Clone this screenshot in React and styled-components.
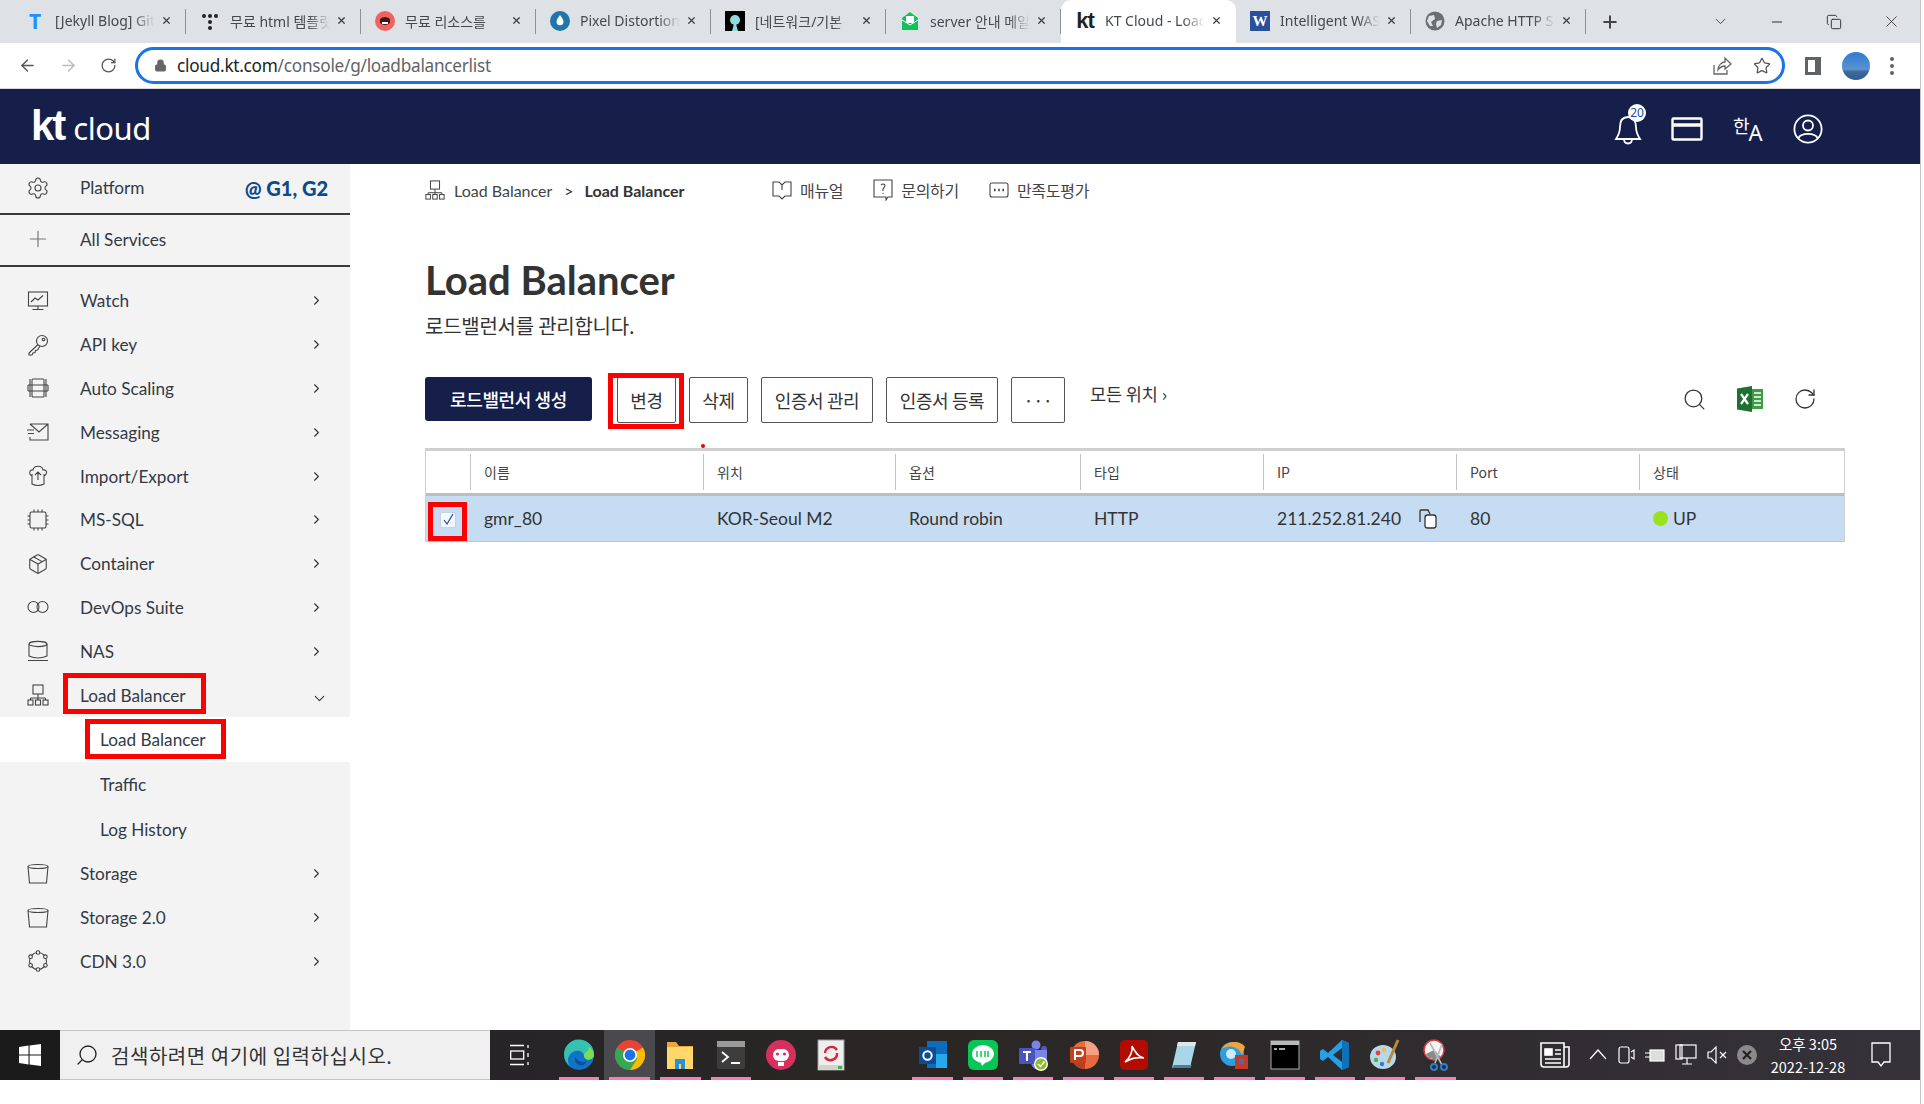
import React from 'react'
import styled, { createGlobalStyle } from 'styled-components'
import { ArrowLeft, ArrowRight, RotateCw, Lock, Star, ChevronDown, ChevronRight, Minus, X, Plus, Search, Settings, Package, Copy } from 'lucide-react'

const SANS = `"Noto Sans", "Noto Sans CJK KR", sans-serif`
const LATO = `Lato, "Noto Sans CJK KR", sans-serif`
const KR = `"Noto Sans CJK KR", "Noto Sans", sans-serif`

const GlobalStyle = createGlobalStyle`
  html, body { margin: 0; padding: 0; background: #fff; }
  *, *::before, *::after { box-sizing: border-box; }
`

const tabs = [
  { title: '[Jekyll Blog] GitHub', icon: 'T' },
  { title: '무료 html 템플릿', icon: 'dots' },
  { title: '무료 리소스를', icon: 'red' },
  { title: 'Pixel Distortion', icon: 'drop' },
  { title: '[네트워크/기본', icon: 'black' },
  { title: 'server 안내 메일', icon: 'mail' },
  { title: 'KT Cloud - Load', icon: 'kt', active: true },
  { title: 'Intelligent WAS', icon: 'W' },
  { title: 'Apache HTTP S', icon: 'globe' },
]

const Fav = ({ name }) => {
  if (name === 'T') return <FavT>T</FavT>
  if (name === 'kt') return <FavKt>kt</FavKt>
  if (name === 'W') return <FavW>W</FavW>
  return (
    <svg width="20" height="20" viewBox="0 0 20 20">
      {name === 'dots' && (
        <g fill="#222">
          <circle cx="4" cy="5" r="2" /><circle cx="10" cy="5" r="2" /><circle cx="16" cy="5" r="2" />
          <circle cx="10" cy="11" r="2" /><circle cx="10" cy="17" r="2" />
        </g>
      )}
      {name === 'red' && (
        <g>
          <circle cx="10" cy="10" r="10" fill="#f2615f" />
          <path d="M5 8 Q10 4 15 8 L15 12 Q10 16 5 12 Z" fill="#3a1a1a" />
          <path d="M7 11h6v2H7z" fill="#fff" />
        </g>
      )}
      {name === 'drop' && (
        <g>
          <circle cx="10" cy="10" r="10" fill="#1f76a8" />
          <path d="M10 4 Q15 10 13 13 A4 4 0 0 1 7 13 Q5 10 10 4Z" fill="#fff" />
        </g>
      )}
      {name === 'black' && (
        <g>
          <rect width="20" height="20" fill="#000" />
          <circle cx="10" cy="9" r="5" fill="#8fdcdc" />
          <path d="M7 20 L9 13 H11 L13 20Z" fill="#8fdcdc" />
        </g>
      )}
      {name === 'mail' && (
        <g>
          <path d="M2 7 L10 1 L18 7 V19 H2Z" fill="#0fc25a" />
          <rect x="6" y="5" width="8" height="7" fill="#fff" />
          <path d="M2 9 L10 14 L18 9" stroke="#fff" strokeWidth="1" fill="none" />
        </g>
      )}
      {name === 'globe' && (
        <g>
          <circle cx="10" cy="10" r="9.5" fill="#6b6f73" />
          <path d="M4 5 L9 4 L10 8 L6 11 L8 15 L5 15 L2 10Z M12 10 L17 9 L16 14 L12 17 L11 13Z" fill="#dee1e6" />
        </g>
      )}
    </svg>
  )
}

const menu = [
  { label: 'Watch', icon: 'watch' },
  { label: 'API key', icon: 'key' },
  { label: 'Auto Scaling', icon: 'scale' },
  { label: 'Messaging', icon: 'mail' },
  { label: 'Import/Export', icon: 'import' },
  { label: 'MS-SQL', icon: 'chip' },
  { label: 'Container', icon: 'box' },
  { label: 'DevOps Suite', icon: 'loop' },
  { label: 'NAS', icon: 'nas' },
]

const tailMenu = [
  { label: 'Storage', icon: 'bucket' },
  { label: 'Storage 2.0', icon: 'bucket' },
  { label: 'CDN 3.0', icon: 'cdn' },
]

const LineIcon = ({ name, size = 22 }) => {
  if (name === 'gear') return <Settings size={24} strokeWidth={1.1} color="#444" />
  if (name === 'plus') return <Plus size={26} strokeWidth={1.1} color="#777" />
  if (name === 'box') return <Package size={22} strokeWidth={1.2} color="#444" />
  return (
    <svg width={size} height={size} viewBox="0 0 22 22" fill="none" stroke="#444" strokeWidth="1.1">
      {name === 'watch' && (
        <g>
          <rect x="1.5" y="2" width="19" height="14" />
          <path d="M4 12 L8 8 L11 10 L16 5.5 M11 16 V19.5 M5.5 19.5 H16.5" />
        </g>
      )}
      {name === 'key' && (
        <g>
          <circle cx="15" cy="7" r="5.5" />
          <circle cx="16.5" cy="5.5" r="1.3" />
          <path d="M11 10.5 L2 19 L2 21 L5 21 L6 19 L8 18.5 L8.5 16.5 L10.5 16 L13 12" />
        </g>
      )}
      {name === 'scale' && (
        <g>
          <rect x="5" y="2" width="12" height="18" rx="1" />
          <path d="M1 8 H21 M1 14 H21 M1 8 V14 M21 8 V14 M3 2 V20 M19 2 V20" />
        </g>
      )}
      {name === 'mail' && (
        <g>
          <path d="M3 3 H21 V19 H3 V16 M3 3 L12 11 L21 3 M0 9 H7 M1 12.5 H7" />
        </g>
      )}
      {name === 'import' && (
        <g>
          <path d="M5 11 C1 9 3 4 6 5 C7 0 15 0 16 5 C20 4 21 9 17 11 M5 9 V19 Q11 22 17 19 V9 M11 15 V7 M8 10 L11 7 L14 10" />
        </g>
      )}
      {name === 'chip' && (
        <g>
          <rect x="3" y="3" width="16" height="16" rx="1.5" />
          <path d="M7 0.5 V3 M11 0.5 V3 M15 0.5 V3 M7 19 V21.5 M11 19 V21.5 M15 19 V21.5 M0.5 7 H3 M0.5 11 H3 M0.5 15 H3 M19 7 H21.5 M19 11 H21.5 M19 15 H21.5" />
        </g>
      )}
      {name === 'loop' && (
        <g>
          <circle cx="6.5" cy="11" r="5.5" />
          <circle cx="15.5" cy="11" r="5.5" />
        </g>
      )}
      {name === 'nas' && (
        <g>
          <ellipse cx="11" cy="4" rx="9" ry="2.6" />
          <path d="M2 4 V16 Q11 20 20 16 V4 M1 20.5 H21" />
        </g>
      )}
      {name === 'net' && (
        <g>
          <rect x="6" y="1" width="10" height="9" />
          <path d="M11 10 V14 M3.5 14 H18.5 M3.5 14 V16 M11 14 V16 M18.5 14 V16" />
          <rect x="1" y="16" width="5" height="5" /><rect x="8.5" y="16" width="5" height="5" /><rect x="16" y="16" width="5" height="5" />
        </g>
      )}
      {name === 'bucket' && (
        <g>
          <ellipse cx="11" cy="3.5" rx="10" ry="2" />
          <path d="M1 3.5 L2.5 20 H19.5 L21 3.5" />
        </g>
      )}
      {name === 'cdn' && (
        <g>
          <circle cx="11" cy="11" r="8.5" />
          <g fill="#f3f3f3">
            <circle cx="11" cy="2.5" r="1.8" /><circle cx="18.4" cy="6.7" r="1.8" /><circle cx="18.4" cy="15.3" r="1.8" />
            <circle cx="11" cy="19.5" r="1.8" /><circle cx="3.6" cy="15.3" r="1.8" /><circle cx="3.6" cy="6.7" r="1.8" />
          </g>
        </g>
      )}
    </svg>
  )
}

const columns = ['이름', '위치', '옵션', '타입', 'IP', 'Port', '상태']

const taskLeft = [
  { name: 'edge', open: true },
  { name: 'chrome', open: true, current: true },
  { name: 'folder', open: true },
  { name: 'term', open: true },
  { name: 'robot' },
  { name: 'sync' },
]

const taskRight = ['outlook', 'line', 'teams', 'ppt', 'acrobat', 'note', 'ie', 'cmd', 'vscode', 'paint', 'snip']

const AppGlyph = ({ name }) => (
  <svg width="32" height="32" viewBox="0 0 32 32">
    {name === 'edge' && (
      <g>
        <circle cx="16" cy="16" r="15" fill="#1173c5" />
        <path d="M1 16 A15 15 0 0 1 31 15 C31 22 21 22 21 17 C21 11 10 9 6 17 C4 21 5 24 7 27 A15 15 0 0 1 1 16Z" fill="#35c1b1" />
        <path d="M21 17 C21 22 31 22 31 16 C31 12 28 9 25 8 C28 12 21 12 21 17Z" fill="#7ddc55" />
        <path d="M12 18 a6 6 0 0 0 12 4 a9 9 0 0 1 -12 -4Z" fill="#0c4f9a" />
      </g>
    )}
    {name === 'chrome' && (
      <g>
        <circle cx="16" cy="16" r="15" fill="#ea4335" />
        <path d="M16 16 L3 8.5 A15 15 0 0 0 16 31 L23.5 19Z" fill="#34a853" />
        <path d="M16 16 L29 8.5 A15 15 0 0 1 16 31 L23.5 19Z" fill="#fbbc04" />
        <circle cx="16" cy="16" r="7" fill="#fff" />
        <circle cx="16" cy="16" r="5.4" fill="#1a73e8" />
      </g>
    )}
    {name === 'folder' && (
      <g>
        <path d="M3 3 H12 L15 7 H29 V30 H3Z" fill="#e8a93a" />
        <rect x="3" y="8" width="26" height="22" fill="#ffd76a" />
        <path d="M11 20 H21 V30 H17 V25 H15 V30 H11Z" fill="#2a8fd6" />
      </g>
    )}
    {name === 'term' && (
      <g>
        <rect x="2" y="2" width="28" height="28" rx="2" fill="#3d3d3d" />
        <rect x="2" y="2" width="28" height="6" fill="#9a9a9a" />
        <path d="M7 13 L13 18 L7 23" stroke="#fff" strokeWidth="1.8" fill="none" />
        <path d="M16 24 H25" stroke="#fff" strokeWidth="2" />
      </g>
    )}
    {name === 'robot' && (
      <g>
        <circle cx="16" cy="16" r="15" fill="#d8305e" />
        <rect x="8" y="10" width="16" height="12" rx="6" fill="#fff" />
        <circle cx="12.5" cy="15" r="1.6" fill="#d8305e" /><circle cx="19.5" cy="15" r="1.6" fill="#d8305e" />
        <rect x="13" y="23" width="6" height="4" fill="#fff" />
      </g>
    )}
    {name === 'sync' && (
      <g>
        <rect x="3" y="1" width="26" height="30" fill="#eee" stroke="#999" />
        <path d="M10 14 A6.5 6.5 0 0 1 22 11 M22 14 A6.5 6.5 0 0 1 10 18" stroke="#d8253a" strokeWidth="2.4" fill="none" />
        <rect x="3" y="26" width="26" height="5" fill="#cfd4cf" />
        <rect x="23" y="27" width="4" height="3" fill="#4cae4c" />
      </g>
    )}
    {name === 'outlook' && (
      <g>
        <rect x="10" y="2" width="20" height="27" fill="#0f6cbd" />
        <rect x="19" y="15" width="11" height="14" fill="#28a8ea" />
        <rect x="2" y="8" width="17" height="17" fill="#0a4d92" />
        <circle cx="10.5" cy="16.5" r="4.2" fill="none" stroke="#fff" strokeWidth="2" />
      </g>
    )}
    {name === 'line' && (
      <g>
        <rect x="1" y="1" width="30" height="30" rx="6" fill="#06c755" />
        <ellipse cx="16" cy="15" rx="11" ry="9" fill="#fff" />
        <path d="M13 22 L15 27 L20 22Z" fill="#fff" />
        <path d="M10 12 V18 M14 12 V18 M18 12 V18 M21 12 V18" stroke="#06c755" strokeWidth="1.5" />
      </g>
    )}
    {name === 'teams' && (
      <g>
        <circle cx="19" cy="6" r="4.5" fill="#7b83eb" />
        <circle cx="27" cy="10" r="3" fill="#5059c9" />
        <path d="M12 11 H30 V22 A8 8 0 0 1 14 24Z" fill="#7b83eb" />
        <rect x="2" y="9" width="16" height="16" rx="1" fill="#4b53bc" />
        <path d="M6 13 H14 M10 13 V22" stroke="#fff" strokeWidth="2" />
        <circle cx="24" cy="25" r="7" fill="#fff" />
        <circle cx="24" cy="25" r="5.6" fill="#8bbf2a" />
        <path d="M21 25 L23.5 27.5 L27.5 22.5" stroke="#fff" strokeWidth="1.5" fill="none" />
      </g>
    )}
    {name === 'ppt' && (
      <g>
        <circle cx="17" cy="16" r="14" fill="#e8693f" />
        <path d="M17 2 A14 14 0 0 1 31 16 H17Z" fill="#f4a083" />
        <path d="M17 16 V30 A14 14 0 0 1 5 23Z" fill="#b83c1d" />
        <rect x="2" y="8" width="16" height="16" rx="1" fill="#c0401f" />
        <path d="M7 21 V11 H12 A3 3 0 0 1 12 17 H7" stroke="#fff" strokeWidth="2" fill="none" />
      </g>
    )}
    {name === 'acrobat' && (
      <g>
        <rect x="2" y="1" width="28" height="30" rx="5" fill="#b30b00" />
        <path d="M7 23 C12 19 15 12 14 7 C17 13 20 18 26 19 C20 18 12 20 7 23Z" fill="none" stroke="#fff" strokeWidth="1.6" />
      </g>
    )}
    {name === 'note' && (
      <g>
        <path d="M10 3 H28 L22 29 H4Z" fill="#a8d8e8" />
        <path d="M10 3 H28 L27 7 H9Z" fill="#dfe6e6" />
        <path d="M4 29 H22 L24 26 H6Z" fill="#4f7f8f" />
      </g>
    )}
    {name === 'ie' && (
      <g>
        <circle cx="14" cy="15" r="12" fill="#2f9ee0" />
        <path d="M4 10 C9 0 24 2 27 8 L24 16 C20 6 9 6 4 10Z" fill="#f3a33c" />
        <circle cx="13" cy="15" r="5" fill="#cfe9f7" />
        <rect x="17" y="16" width="13" height="14" fill="#c23a2c" />
        <rect x="21" y="20" width="5" height="5" fill="#3b6fc0" />
      </g>
    )}
    {name === 'cmd' && (
      <g>
        <rect x="2" y="2" width="28" height="28" fill="#000" stroke="#aaa" />
        <rect x="2" y="2" width="28" height="4" fill="#b9b9b9" />
        <path d="M5 10 H8 M10 10 H16" stroke="#ddd" strokeWidth="1.4" />
      </g>
    )}
    {name === 'vscode' && (
      <g>
        <path d="M23 1 L30 4 V28 L23 31 L9 18 L4 22 L1 20 V12 L4 10 L9 14Z" fill="#23a0e8" />
        <path d="M23 9 L14 16 L23 23Z" fill="#2f2d33" />
        <path d="M23 1 L30 4 V28 L23 31Z" fill="#0e72bb" />
      </g>
    )}
    {name === 'paint' && (
      <g>
        <ellipse cx="14" cy="18" rx="13" ry="12" fill="#b9d7ea" />
        <circle cx="9" cy="14" r="2.4" fill="#e0463c" /><circle cx="15" cy="11" r="2.2" fill="#f1c232" />
        <circle cx="7" cy="21" r="2.2" fill="#4caf50" /><circle cx="13" cy="25" r="2.2" fill="#2e7bd6" />
        <path d="M29 1 L19 24" stroke="#b58a3c" strokeWidth="3" />
      </g>
    )}
    {name === 'snip' && (
      <g>
        <circle cx="14" cy="11" r="10" fill="#f3f3f3" stroke="#cc3b3b" strokeWidth="1.5" />
        <path d="M6 15 A10 10 0 0 0 21 18 L14 11Z" fill="#8a8a8a" />
        <path d="M10 4 L22 26 M22 5 L15 24" stroke="#b5bbc0" strokeWidth="1.6" />
        <circle cx="24" cy="28" r="3" fill="none" stroke="#2a7fd0" strokeWidth="2" />
        <circle cx="14" cy="28" r="3" fill="none" stroke="#2a7fd0" strokeWidth="2" />
      </g>
    )}
  </svg>
)

const App = () => {
  return (
    <Page>
      <GlobalStyle />
      <Screen>
        <TabStrip>
          {tabs.map((t) => (
            <Tab key={t.title} $active={t.active}>
              <FavBox><Fav name={t.icon} /></FavBox>
              <TabTitle>{t.title}</TabTitle>
              <X size={17} strokeWidth={2.6} color="#3c4043" />
            </Tab>
          ))}
          <NewTab><Plus size={20} strokeWidth={2.4} color="#444" /></NewTab>
          <WinControls>
            <ChevronDown size={17} strokeWidth={1.2} color="#333" />
            <Minus size={16} strokeWidth={1.4} color="#222" />
            <Copy size={16} strokeWidth={1.3} color="#222" />
            <X size={19} strokeWidth={1} color="#222" />
          </WinControls>
        </TabStrip>

        <AddressBar>
          <NavBtns>
            <ArrowLeft size={19} strokeWidth={1.8} color="#555" />
            <ArrowRight size={19} strokeWidth={1.8} color="#bbb" />
            <RotateCw size={17} strokeWidth={1.8} color="#555" />
          </NavBtns>
          <UrlPill>
            <Lock size={13} fill="#666" color="#666" />
            <UrlText>cloud.kt.com<span>/console/g/loadbalancerlist</span></UrlText>
            <UrlIcons>
              <svg width="20" height="20" viewBox="0 0 20 20" fill="none" stroke="#666" strokeWidth="1.3">
                <path d="M2 9 V18 H15 V14 M6 14 C6 9 10 6 13 6 V2 L19 8 L13 13 V10 C10 10 8 11 6 14Z" />
              </svg>
              <Star size={18} strokeWidth={1.7} color="#555" />
            </UrlIcons>
          </UrlPill>
          <BarRight>
            <PanelIcon />
            <Avatar />
            <Dots><i /><i /><i /></Dots>
          </BarRight>
        </AddressBar>

        <TopNav>
          <Logo><b>kt</b><span>cloud</span></Logo>
          <NavIcons>
            <BellWrap>
              <svg width="30" height="32" viewBox="0 0 30 32" fill="none" stroke="#fff" strokeWidth="1.8">
                <path d="M15 3 C9 3 7 8 7 13 C7 19 5 22 3 25 H27 C25 22 23 19 23 13 C23 8 21 3 15 3Z M11 25 C11 31 19 31 19 25" />
              </svg>
              <BellBadge>20</BellBadge>
            </BellWrap>
            <svg width="32" height="24" viewBox="0 0 32 24" fill="none" stroke="#fff" strokeWidth="2.4">
              <rect x="1.5" y="1.5" width="29" height="21" rx="1" />
              <path d="M1.5 8 H30.5" strokeWidth="3.5" />
            </svg>
            <LangGlyph><span>한</span><small>A</small></LangGlyph>
            <svg width="30" height="30" viewBox="0 0 30 30" fill="none" stroke="#fff" strokeWidth="1.8">
              <circle cx="15" cy="15" r="13.6" />
              <circle cx="15" cy="11.5" r="5" />
              <path d="M5.5 24 C8 18.5 22 18.5 24.5 24" />
            </svg>
          </NavIcons>
        </TopNav>

        <Body>
          <Sidebar>
            <TopRow $h={51} $lift>
              <IconSlot><LineIcon name="gear" /></IconSlot>
              <RowLabel>Platform</RowLabel>
              <Region>@ G1, G2</Region>
            </TopRow>
            <TopRow $h={52} $lift>
              <IconSlot><LineIcon name="plus" /></IconSlot>
              <RowLabel>All Services</RowLabel>
            </TopRow>
            <MenuList>
              {menu.map((m) => (
                <MenuRow key={m.label}>
                  <IconSlot><LineIcon name={m.icon} /></IconSlot>
                  <RowLabel>{m.label}</RowLabel>
                  <ChevronRight size={15} strokeWidth={1.8} color="#333" />
                </MenuRow>
              ))}
              <MenuRow>
                <IconSlot><LineIcon name="net" /></IconSlot>
                <RowLabel $marked>Load Balancer</RowLabel>
                <Down><ChevronDown size={17} strokeWidth={1.6} color="#333" /></Down>
              </MenuRow>
              <SubRow $active><SubLabel $marked>Load Balancer</SubLabel></SubRow>
              <SubRow><SubLabel>Traffic</SubLabel></SubRow>
              <SubRow><SubLabel>Log History</SubLabel></SubRow>
              {tailMenu.map((m) => (
                <MenuRow key={m.label}>
                  <IconSlot><LineIcon name={m.icon} /></IconSlot>
                  <RowLabel>{m.label}</RowLabel>
                  <ChevronRight size={15} strokeWidth={1.8} color="#333" />
                </MenuRow>
              ))}
            </MenuList>
          </Sidebar>

          <Main>
            <Breadcrumb>
              <Crumbs>
                <svg width="20" height="20" viewBox="0 0 22 22" fill="none" stroke="#444" strokeWidth="1.1">
                  <rect x="6" y="1" width="10" height="9" />
                  <path d="M11 10 V14 M3.5 14 H18.5 M3.5 14 V16 M11 14 V16 M18.5 14 V16" />
                  <rect x="1" y="16" width="5" height="5" /><rect x="8.5" y="16" width="5" height="5" /><rect x="16" y="16" width="5" height="5" />
                </svg>
                <span>Load Balancer</span>
                <em>&gt;</em>
                <strong>Load Balancer</strong>
              </Crumbs>
              <HelpLinks>
                <HelpLink>
                  <svg width="20" height="20" viewBox="0 0 20 20" fill="none" stroke="#444" strokeWidth="1.1">
                    <path d="M1 2 H7 L10 5 L13 2 H19 V16 H13 L10 19 L7 16 H1Z M10 5 V10" />
                  </svg>
                  매뉴얼
                </HelpLink>
                <HelpLink>
                  <svg width="20" height="22" viewBox="0 0 20 22" fill="none" stroke="#444" strokeWidth="1.1">
                    <path d="M1 1 H19 V18 H15 L13 21 V18 H1Z M8 6 Q10 4 12 6 Q12 8 10 10 V12 M10 14 V15" />
                  </svg>
                  문의하기
                </HelpLink>
                <HelpLink>
                  <svg width="20" height="16" viewBox="0 0 20 16" fill="none" stroke="#444" strokeWidth="1.1">
                    <rect x="1" y="1" width="18" height="14" rx="2" />
                    <path d="M5 8 H6.6 M9.2 8 H10.8 M13.4 8 H15" strokeWidth="2.4" />
                  </svg>
                  만족도평가
                </HelpLink>
              </HelpLinks>
            </Breadcrumb>

            <Title>Load Balancer</Title>
            <Subtitle>로드밸런서를 관리합니다.</Subtitle>

            <Toolbar>
              <PrimaryButton>로드밸런서 생성</PrimaryButton>
              <OutlineButton $w={59} $marked>변경</OutlineButton>
              <OutlineButton $w={59}>삭제</OutlineButton>
              <OutlineButton $w={112}>인증서 관리</OutlineButton>
              <OutlineButton $w={112}>인증서 등록</OutlineButton>
              <OutlineButton $w={54}>···</OutlineButton>
              <AllRegions>모든 위치 ›</AllRegions>
              <ToolIcons>
                <Search size={25} strokeWidth={1.2} color="#333" />
                <svg width="26" height="26" viewBox="0 0 26 26">
                  <rect x="9" y="3" width="17" height="20" fill="#3f9c46" />
                  <path d="M0 2.5 L15 0 V26 L0 23.5Z" fill="#1f6e32" />
                  <path d="M4 8 L11 18 M11 8 L4 18" stroke="#fff" strokeWidth="2.2" />
                  <path d="M17 7 H24 M17 11 H24 M17 15 H24 M17 19 H24" stroke="#fff" strokeWidth="1.6" />
                </svg>
                <RotateCw size={24} strokeWidth={1.3} color="#333" />
              </ToolIcons>
            </Toolbar>

            <Table>
              <RedDot />
              <HeadRow>
                <HeadCell />
                {columns.map((c) => <HeadCell key={c}>{c}</HeadCell>)}
              </HeadRow>
              <DataRow>
                <CheckCell>
                  <CheckBox>
                    <svg width="13" height="13" viewBox="0 0 13 13" fill="none" stroke="#1c4f9c" strokeWidth="1.2">
                      <path d="M2 7 L5 11 L11 1" />
                    </svg>
                  </CheckBox>
                </CheckCell>
                <Cell>gmr_80</Cell>
                <Cell>KOR-Seoul M2</Cell>
                <Cell>Round robin</Cell>
                <Cell>HTTP</Cell>
                <Cell>
                  211.252.81.240
                  <CopyIcon>
                    <svg width="18" height="20" viewBox="0 0 18 20" fill="none" stroke="#333" strokeWidth="1.3">
                      <path d="M1 13 V2 Q1 1 2 1 H9 L11 5" />
                      <rect x="6" y="6" width="11" height="13" rx="2.5" fill="#fff" />
                    </svg>
                  </CopyIcon>
                </Cell>
                <Cell>80</Cell>
                <Cell><StatusDot />UP</Cell>
              </DataRow>
            </Table>
          </Main>
        </Body>

        <Taskbar>
          <StartBtn>
            <svg width="22" height="22" viewBox="0 0 22 22" fill="#fff">
              <path d="M0 3 L9.5 1.6 V10.4 H0Z M10.6 1.4 L22 0 V10.4 H10.6Z M0 11.6 H9.5 V20.4 L0 19Z M10.6 11.6 H22 V22 L10.6 20.6Z" />
            </svg>
          </StartBtn>
          <SearchBox>
            <TaskSearch><Search size={24} strokeWidth={1.3} color="#222" /></TaskSearch>
            <span>검색하려면 여기에 입력하십시오.</span>
          </SearchBox>
          <TaskView>
            <svg width="20" height="22" viewBox="0 0 20 22" fill="none" stroke="#fff" strokeWidth="1.3">
              <path d="M0 1.5 H14 M0 20.5 H14 M18 1 V4 M18 9 V13 M18 18 V21" />
              <rect x="0.7" y="7" width="13" height="8" />
            </svg>
          </TaskView>
          <TaskGroup>
            {taskLeft.map((a) => (
              <TaskItem key={a.name} $open={a.open} $current={a.current}><AppGlyph name={a.name} /></TaskItem>
            ))}
          </TaskGroup>
          <TaskGroup $second>
            {taskRight.map((n) => (
              <TaskItem key={n} $open><AppGlyph name={n} /></TaskItem>
            ))}
          </TaskGroup>
          <Tray>
            <svg width="30" height="28" viewBox="0 0 30 28" fill="none" stroke="#fff" strokeWidth="1.6">
              <path d="M1 2 H24 V26 H4 Q1 26 1 23Z M24 6 H29 V23 Q29 26 26 26 H20" />
              <rect x="5" y="8" width="7" height="6" fill="#fff" />
              <path d="M15 9 H21 M15 13 H21 M5 18 H21 M5 22 H21" />
            </svg>
            <TrayIcons>
              <svg width="18" height="18" viewBox="0 0 18 18" fill="none" stroke="#fff" strokeWidth="1.2"><path d="M1 13 L9 4 L17 13" /></svg>
              <svg width="18" height="22" viewBox="0 0 18 22" fill="none" stroke="#fff" strokeWidth="1.2"><rect x="2" y="3" width="10" height="16" rx="2" /><path d="M14 8 L17 6 V15 L14 13" /></svg>
              <svg width="20" height="18" viewBox="0 0 20 18" fill="none" stroke="#fff" strokeWidth="1.2"><rect x="5" y="4" width="14" height="11" fill="#ddd" /><path d="M0 7 H5 M0 11 H5" /></svg>
              <svg width="22" height="22" viewBox="0 0 22 22" fill="none" stroke="#fff" strokeWidth="1.2"><rect x="5" y="1" width="16" height="13" /><rect x="1" y="1" width="6" height="14" /><path d="M12 14 V20 M7 20 H17" /></svg>
              <svg width="20" height="18" viewBox="0 0 20 18" fill="none" stroke="#fff" strokeWidth="1.2"><path d="M1 6 H4 L9 1 V17 L4 12 H1Z M13 6 L19 12 M19 6 L13 12" /></svg>
              <svg width="20" height="20" viewBox="0 0 20 20"><circle cx="10" cy="10" r="10" fill="#8a8a8a" /><path d="M6 6 L14 14 M14 6 L6 14" stroke="#222" strokeWidth="2.2" /></svg>
            </TrayIcons>
            <Clock><span>오후 3:05</span><span>2022-12-28</span></Clock>
            <svg width="20" height="26" viewBox="0 0 20 26" fill="none" stroke="#fff" strokeWidth="1.3">
              <path d="M1 1 H19 V20 H13 L10 24 L7 20 H1Z" />
            </svg>
          </Tray>
        </Taskbar>
      </Screen>
      <EdgeStrip />
    </Page>
  )
}

export default App

const Page = styled.div`
  display: flex;
  width: 1924px;
  height: 1104px;
  overflow: hidden;
  background: #fff;
`
const Screen = styled.div`
  width: 1920px;
  display: flex;
  flex-direction: column;
`
const EdgeStrip = styled.div`
  width: 4px;
  border-left: 1px solid #c4c4c4;
  background: #fbfbfb;
`

/* browser tabs */
const TabStrip = styled.div`
  height: 43px;
  flex: none;
  display: flex;
  align-items: stretch;
  padding-left: 11px;
  background: #dee1e6;
  font-family: ${SANS};
`
const Tab = styled.div`
  width: 175px;
  padding: 0 14px 2px 14px;
  display: flex;
  align-items: center;
  position: relative;
  background: ${(p) => (p.$active ? '#fff' : 'transparent')};
  border-radius: ${(p) => (p.$active ? '10px 10px 0 0' : '0')};
  &::after {
    content: '';
    position: absolute;
    right: 0;
    top: 9px;
    bottom: 9px;
    width: 1px;
    background: ${(p) => (p.$active ? 'transparent' : '#8e9196')};
  }
`
const FavBox = styled.div`
  width: 20px;
  height: 20px;
  flex: none;
  display: flex;
  align-items: center;
  justify-content: center;
  margin-right: 10px;
`
const FavT = styled.span`
  color: #1e90ff;
  font: 700 21px ${SANS};
`
const FavKt = styled.span`
  color: #222;
  font: 800 22px/20px "Liberation Sans", sans-serif;
  letter-spacing: -1px;
`
const FavW = styled.span`
  display: block;
  width: 20px;
  height: 20px;
  background: #2a4f9c;
  color: #fff;
  font: 700 15px/20px "Liberation Serif", serif;
  text-align: center;
`
const TabTitle = styled.div`
  width: 100px;
  flex: none;
  margin-right: 6px;
  font-size: 14px;
  color: #45494e;
  white-space: nowrap;
  overflow: hidden;
  -webkit-mask-image: linear-gradient(90deg, #000 78%, transparent 100%);
  mask-image: linear-gradient(90deg, #000 78%, transparent 100%);
`
const NewTab = styled.div`
  width: 48px;
  display: flex;
  align-items: center;
  justify-content: center;
`
const WinControls = styled.div`
  margin-left: auto;
  margin-right: 19px;
  width: 189px;
  display: flex;
  align-items: center;
  justify-content: space-between;
`

/* address bar */
const AddressBar = styled.div`
  height: 46px;
  flex: none;
  display: flex;
  align-items: center;
  background: #fff;
  border-bottom: 1px solid #d9d9d9;
  font-family: ${SANS};
`
const NavBtns = styled.div`
  width: 135px;
  flex: none;
  padding: 0 18px;
  display: flex;
  align-items: center;
  justify-content: space-between;
`
const UrlPill = styled.div`
  width: 1650px;
  height: 37px;
  flex: none;
  border: 3px solid #1a73e8;
  border-radius: 19px;
  padding: 0 11px 0 16px;
  display: flex;
  align-items: center;
  gap: 10px;
`
const UrlText = styled.div`
  font-size: 17.2px;
  letter-spacing: -0.25px;
  color: #202124;
  span { color: #5f6368; }
`
const UrlIcons = styled.div`
  margin-left: auto;
  display: flex;
  align-items: center;
  gap: 21px;
`
const BarRight = styled.div`
  flex: 1;
  padding: 0 26px 0 20px;
  display: flex;
  align-items: center;
  justify-content: space-between;
`
const PanelIcon = styled.div`
  width: 16px;
  height: 18px;
  border: 3px solid #5f6368;
  border-right-width: 6px;
`
const Avatar = styled.div`
  width: 28px;
  height: 28px;
  border-radius: 50%;
  background: linear-gradient(180deg, #2f7bd4 0%, #5a92cf 62%, #3f6a96 70%, #2a5c96 100%);
`
const Dots = styled.div`
  display: flex;
  flex-direction: column;
  gap: 3px;
  i {
    display: block;
    width: 4px;
    height: 4px;
    border-radius: 50%;
    background: #5f6368;
  }
`

/* kt cloud header */
const TopNav = styled.div`
  height: 75px;
  flex: none;
  display: flex;
  align-items: center;
  justify-content: space-between;
  padding: 0 97px 0 31px;
  background: #161f4a;
  color: #fff;
`
const Logo = styled.div`
  display: flex;
  align-items: baseline;
  gap: 9px;
  b {
    font: 800 42px/38px "Liberation Sans", sans-serif;
    letter-spacing: -2px;
  }
  span {
    font: 400 31px/38px ${SANS};
    letter-spacing: -0.5px;
  }
`
const NavIcons = styled.div`
  display: flex;
  align-items: center;
  gap: 28px;
  padding-top: 4px;
`
const BellWrap = styled.div`
  position: relative;
  width: 30px;
  height: 32px;
  margin-top: 2px;
`
const BellBadge = styled.span`
  position: absolute;
  left: 15px;
  top: -10px;
  width: 18px;
  height: 18px;
  border-radius: 50%;
  background: #fff;
  color: #1d4ea0;
  font: 400 12px/18px ${SANS};
  text-align: center;
`
const LangGlyph = styled.div`
  width: 34px;
  padding-left: 2px;
  display: flex;
  align-items: flex-start;
  span {
    font: 400 18px/22px ${KR};
  }
  small {
    font: 400 22px/22px ${SANS};
    margin: 7px 0 0 -1px;
  }
`

/* body */
const Body = styled.div`
  height: 866px;
  flex: none;
  display: flex;
`
const Sidebar = styled.aside`
  width: 350px;
  flex: none;
  background: #f3f3f3;
  font-family: ${LATO};
`
const TopRow = styled.div`
  height: ${(p) => p.$h}px;
  display: flex;
  align-items: center;
  padding: 0 22px ${(p) => (p.$lift ? '2px' : '0')} 0;
  border-bottom: 2px solid #3a3a3a;
`
const IconSlot = styled.div`
  width: 76px;
  padding-right: 0;
  flex: none;
  display: flex;
  justify-content: center;
`
const RowLabel = styled.span`
  position: relative;
  margin-left: 4px;
  flex: 1;
  font-size: 17.2px;
  color: #333a45;
  ${(p) => p.$marked && `
    flex: none;
    &::after {
      content: '';
      position: absolute;
      left: -17px;
      right: -20px;
      top: -12px;
      bottom: -8px;
      border: 5px solid #fe0000;
    }
    margin-right: auto;
  `}
`
const Region = styled.span`
  font-size: 20px;
  font-weight: 900;
  color: #0c4a8c;
`
const MenuList = styled.div`
  padding-top: 12px;
`
const MenuRow = styled.div`
  height: 43.8px;
  display: flex;
  align-items: center;
  padding-right: 26px;
`
const Down = styled.span`
  display: flex;
  margin: 7px -4px 0 0;
`
const SubRow = styled.div`
  height: 45px;
  padding-top: 1px;
  display: flex;
  align-items: center;
  padding-left: 100px;
  background: ${(p) => (p.$active ? '#fff' : 'transparent')};
`
const SubLabel = styled.span`
  position: relative;
  font-size: 17.2px;
  color: #333a45;
  ${(p) => p.$marked && `
    &::after {
      content: '';
      position: absolute;
      left: -15px;
      right: -20px;
      top: -10px;
      bottom: -9px;
      border: 5px solid #fe0000;
    }
  `}
`

/* main column */
const Main = styled.main`
  flex: 1;
  padding: 15px 75px 0 75px;
  font-family: ${LATO};
`
const Breadcrumb = styled.div`
  height: 22px;
  display: flex;
  align-items: center;
  font-size: 16px;
  color: #444;
`
const Crumbs = styled.div`
  width: 347px;
  flex: none;
  display: flex;
  align-items: center;
  gap: 9px;
  em { font-style: normal; margin: 0 2px 0 3px; color: #333; }
  strong { font-weight: 700; color: #333; }
`
const HelpLinks = styled.div`
  display: flex;
  align-items: center;
  gap: 30px;
`
const HelpLink = styled.div`
  display: flex;
  align-items: center;
  gap: 8px;
  font: 400 16px ${KR};
  letter-spacing: -0.3px;
  color: #444;
`
const Title = styled.h1`
  margin: 56px 0 0;
  font-size: 40px;
  line-height: 46px;
  font-weight: 700;
  color: #333;
`
const Subtitle = styled.p`
  margin: 10px 0 0;
  font: 400 20px/26px ${KR};
  letter-spacing: -0.25px;
  color: #333;
`
const Toolbar = styled.div`
  margin-top: 38px;
  height: 46px;
  display: flex;
  align-items: flex-start;
  gap: 13px;
`
const PrimaryButton = styled.button`
  all: unset;
  width: 167px;
  height: 44px;
  margin-right: 12px;
  background: #161f4a;
  border-radius: 3px;
  color: #fff;
  font: 500 18px/44px ${KR};
  letter-spacing: -0.4px;
  text-align: center;
`
const OutlineButton = styled.button`
  all: unset;
  position: relative;
  box-sizing: border-box;
  width: ${(p) => p.$w}px;
  height: 46px;
  border: 1px solid #555;
  border-radius: 2px;
  color: #333;
  font: 400 18px/44px ${KR};
  letter-spacing: -0.4px;
  text-align: center;
  ${(p) => p.$marked && `
    &::after {
      content: '';
      position: absolute;
      left: -10px;
      right: -9px;
      top: -5px;
      bottom: -7px;
      border: 5px solid #fe0000;
    }
  `}
`
const AllRegions = styled.span`
  margin: 6px 0 0 12px;
  font: 400 17.5px/22px ${KR};
  letter-spacing: -0.1px;
  color: #333;
`
const ToolIcons = styled.div`
  margin: 9px 28px 0 auto;
  display: flex;
  align-items: center;
  gap: 30px;
`
const Table = styled.div`
  position: relative;
  margin-top: 25px;
  border-top: 3px solid #cfcfcf;
  border-left: 1px solid #cfcfcf;
  border-right: 1px solid #cfcfcf;
`
const RedDot = styled.span`
  position: absolute;
  left: 275px;
  top: -7px;
  width: 4px;
  height: 4px;
  border-radius: 50%;
  background: #e60000;
`
const HeadRow = styled.div`
  display: grid;
  grid-template-columns: 44px 233px 192px 185px 183px 193px 183px 1fr;
  height: 45px;
  align-items: center;
  border-bottom: 3px solid #bdbdc2;
`
const HeadCell = styled.div`
  height: 36px;
  padding-left: 13px;
  border-left: 1px solid #c4c4c4;
  font: 400 14px/36px ${KR};
  color: #444;
  &:first-child { border-left: 0; }
`
const DataRow = styled.div`
  display: grid;
  grid-template-columns: 44px 233px 192px 185px 183px 193px 183px 1fr;
  height: 46px;
  align-items: center;
  background: #c5dcf3;
  border-bottom: 1px solid #bcc8d6;
`
const Cell = styled.div`
  padding-left: 14px;
  display: flex;
  align-items: center;
  font-size: 17.5px;
  color: #333;
`
const CheckCell = styled.div`
  position: relative;
  align-self: stretch;
  padding-top: 2px;
  display: flex;
  align-items: center;
  justify-content: center;
  &::after {
    content: '';
    position: absolute;
    left: 2px;
    top: 6px;
    width: 39px;
    height: 39px;
    border: 5px solid #fe0000;
  }
`
const CheckBox = styled.span`
  width: 16px;
  height: 16px;
  background: #f4f7fb;
  border: 1px solid #c8d2de;
  border-radius: 2px;
  display: flex;
  align-items: center;
  justify-content: center;
`
const CopyIcon = styled.span`
  display: flex;
  margin-left: 18px;
`
const StatusDot = styled.span`
  width: 15px;
  height: 15px;
  border-radius: 50%;
  background: #9ae21e;
  margin-right: 5px;
`

/* windows taskbar */
const Taskbar = styled.div`
  height: 50px;
  flex: none;
  display: flex;
  align-items: stretch;
  background: linear-gradient(90deg, #22232b 0%, #2a2624 50%, #35323a 100%);
`
const StartBtn = styled.div`
  width: 60px;
  display: flex;
  align-items: center;
  justify-content: center;
  background: #1b1b1b;
`
const SearchBox = styled.div`
  width: 430px;
  padding-left: 15px;
  display: flex;
  align-items: center;
  gap: 12px;
  background: #f0f0f0;
  border: 1px solid #c6c6c6;
  border-width: 1px 0;
  font: 400 20px ${KR};
  letter-spacing: 0.55px;
  color: #333;
`
const TaskSearch = styled.span`
  display: flex;
  transform: scaleX(-1);
`
const TaskView = styled.div`
  width: 64px;
  padding-left: 20px;
  display: flex;
  align-items: center;
`
const TaskGroup = styled.div`
  display: flex;
  margin-left: ${(p) => (p.$second ? '51px' : '0')};
`
const TaskItem = styled.div`
  position: relative;
  width: ${(p) => (p.$current ? '51px' : '50.3px')};
  display: flex;
  align-items: center;
  justify-content: center;
  background: ${(p) => (p.$current ? '#4a4a4e' : 'transparent')};
  ${(p) => p.$open && `
    &::after {
      content: '';
      position: absolute;
      left: 5px;
      right: 5px;
      bottom: 0;
      height: 3px;
      background: #fb7cb4;
    }
  `}
`
const Tray = styled.div`
  margin-left: auto;
  padding-right: 29px;
  display: flex;
  align-items: center;
`
const TrayIcons = styled.div`
  margin-left: 19px;
  display: flex;
  align-items: center;
  gap: 10px;
`
const Clock = styled.div`
  width: 100px;
  margin: 0 13px 0 1px;
  display: flex;
  flex-direction: column;
  align-items: center;
  gap: 4px;
  font: 400 14.5px/19px ${KR};
  color: #fff;
`
